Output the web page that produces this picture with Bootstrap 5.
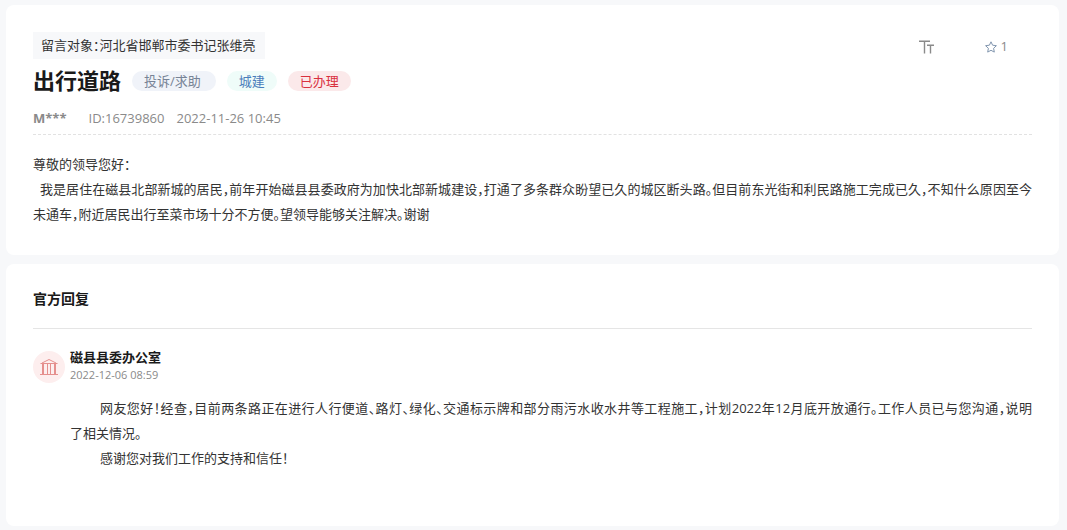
<!DOCTYPE html>
<html lang="zh-CN">
<head>
<meta charset="utf-8">
<meta name="viewport" content="width=device-width, initial-scale=1">
<title>出行道路</title>
<link href="https://cdn.jsdelivr.net/npm/bootstrap@5.3.0/dist/css/bootstrap.min.css" rel="stylesheet">
<style>
body { background: #f7f8fa; color: #333; font-family: "Open Sans", "Noto Sans CJK SC", sans-serif; font-size: 13px; line-height: 25px; padding: 5px 8px 4px 6px; }
.panel { background: #fff; border-radius: 8px; padding: 27px 27px 28px; }
.panel + .panel { margin-top: 9px; padding-bottom: 55px; }
.target { background: #f7f8fa; line-height: 27px; padding: 0 9px 0 8px; }
.prose, .target { font-feature-settings: "halt"; }
.prose { text-align: justify; }
.prose p { margin: 0; }
.topic { font-size: 22px; line-height: 34px; font-weight: 700; color: #1a1a1a; padding-bottom: 2px; }
.heading-row { gap: 11px; margin-top: 4px; }
.tag { line-height: 20px; padding: 0 12px; }
.tag-kind { background: #f0f3f9; color: #778396; padding-right: 15px; }
.tag-field { background: #effcf9; color: #4a7ebb; }
.tag-done { background: #fbe9ea; color: #d9303e; }
.meta { color: #8a8a8a; line-height: 18px; margin-top: 10px; padding-bottom: 7px; border-bottom: 1px dashed #e2e2e2; gap: 12px; }
.author { margin-right: 10px; }
.letter { margin-top: 17px; }
.letter-open { text-indent: 7px; }
.tools { gap: 50px; margin-right: 24px; padding-top: 2px; color: #8a8a8a; }
.tool { color: inherit; line-height: 25px; font-size: 13px; }
.section-title { font-size: 14px; line-height: 16px; font-weight: 700; color: #1a1a1a; margin: 0; padding-bottom: 21px; border-bottom: 1px solid #e5e5e5; }
.reply { gap: 5px; margin-top: 18px; }
.avatar { width: 32px; height: 32px; background: #fdeeee; margin-top: 4px; }
.office { font-size: 13px; line-height: 20px; font-weight: 700; color: #1a1a1a; margin: 0; }
.reply time { font-size: 11px; line-height: 16px; color: #8a8a8a; }
.answer { margin-top: 13px; }
.answer p { text-indent: 30px; }
</style>
</head>
<body>
<main>
  <article class="panel">
    <header>
      <div class="d-flex justify-content-between align-items-start">
        <div class="target">留言对象：河北省邯郸市委书记张维亮</div>
        <div class="tools d-flex align-items-center">
          <button type="button" class="tool btn p-0 border-0 d-flex align-items-center" aria-label="字号">
            <svg width="16" height="14" viewBox="0 0 16 14" fill="none" stroke="currentColor" stroke-width="1.4" aria-hidden="true"><path d="M0 1.2h11M5.500 1v12.500M8 5.200h7M11.500 5v8.500"/></svg>
          </button>
          <button type="button" class="tool btn p-0 border-0 d-flex align-items-center gap-1" aria-label="收藏 1">
            <svg width="12" height="12" viewBox="0 0 12 12" fill="none" stroke="#8095ae" stroke-linejoin="round" aria-hidden="true"><path d="M6 .8l1.6 3.4 3.8.5-2.8 2.6.7 3.8L6 9.3l-3.3 1.8.7-3.8L.6 4.700l3.800-.5z"/></svg>
            <span>1</span>
          </button>
        </div>
      </div>
      <div class="heading-row d-flex flex-wrap align-items-center">
        <h1 class="topic m-0">出行道路</h1>
        <span class="tag tag-kind rounded-pill">投诉/求助</span>
        <span class="tag tag-field rounded-pill">城建</span>
        <span class="tag tag-done rounded-pill">已办理</span>
      </div>
      <div class="meta d-flex flex-wrap">
        <strong class="author">M***</strong>
        <span>ID:16739860</span>
        <time datetime="2022-11-26T10:45">2022-11-26 10:45</time>
      </div>
    </header>
    <div class="letter prose">
      <p>尊敬的领导您好：</p>
      <p class="letter-open">我是居住在磁县北部新城的居民，前年开始磁县县委政府为加快北部新城建设，打通了多条群众盼望已久的城区断头路。但目前东光街和利民路施工完成已久，不知什么原因至今未通车，附近居民出行至菜市场十分不方便。望领导能够关注解决。谢谢</p>
    </div>
  </article>

  <section class="panel">
    <h2 class="section-title">官方回复</h2>
    <div class="reply d-flex align-items-start">
      <div class="avatar rounded-circle flex-shrink-0 d-flex align-items-center justify-content-center">
        <svg width="18" height="18" viewBox="0 0 18 18" fill="none" stroke="#e58f8d" aria-hidden="true"><path d="M.5 5.500h17M2 5L9 1.500 16 5M0 16.500h18M2.500 6v10M3.500 6v10M7.500 6v10M10.500 6v10M14.500 6v10M15.500 6v10"/></svg>
      </div>
      <div class="flex-grow-1">
        <h3 class="office">磁县县委办公室</h3>
        <time class="d-block" datetime="2022-12-06T08:59">2022-12-06 08:59</time>
        <div class="answer prose">
          <p>网友您好！经查，目前两条路正在进行人行便道、路灯、绿化、交通标示牌和部分雨污水收水井等工程施工，计划2022年12月底开放通行。工作人员已与您沟通，说明<span class="text-nowrap">了相关情况。</span></p>
          <p>感谢您对我们工作的支持和信任！</p>
        </div>
      </div>
    </div>
  </section>
</main>
<script src="https://cdn.jsdelivr.net/npm/bootstrap@5.3.0/dist/js/bootstrap.bundle.min.js"></script>
</body>
</html>
